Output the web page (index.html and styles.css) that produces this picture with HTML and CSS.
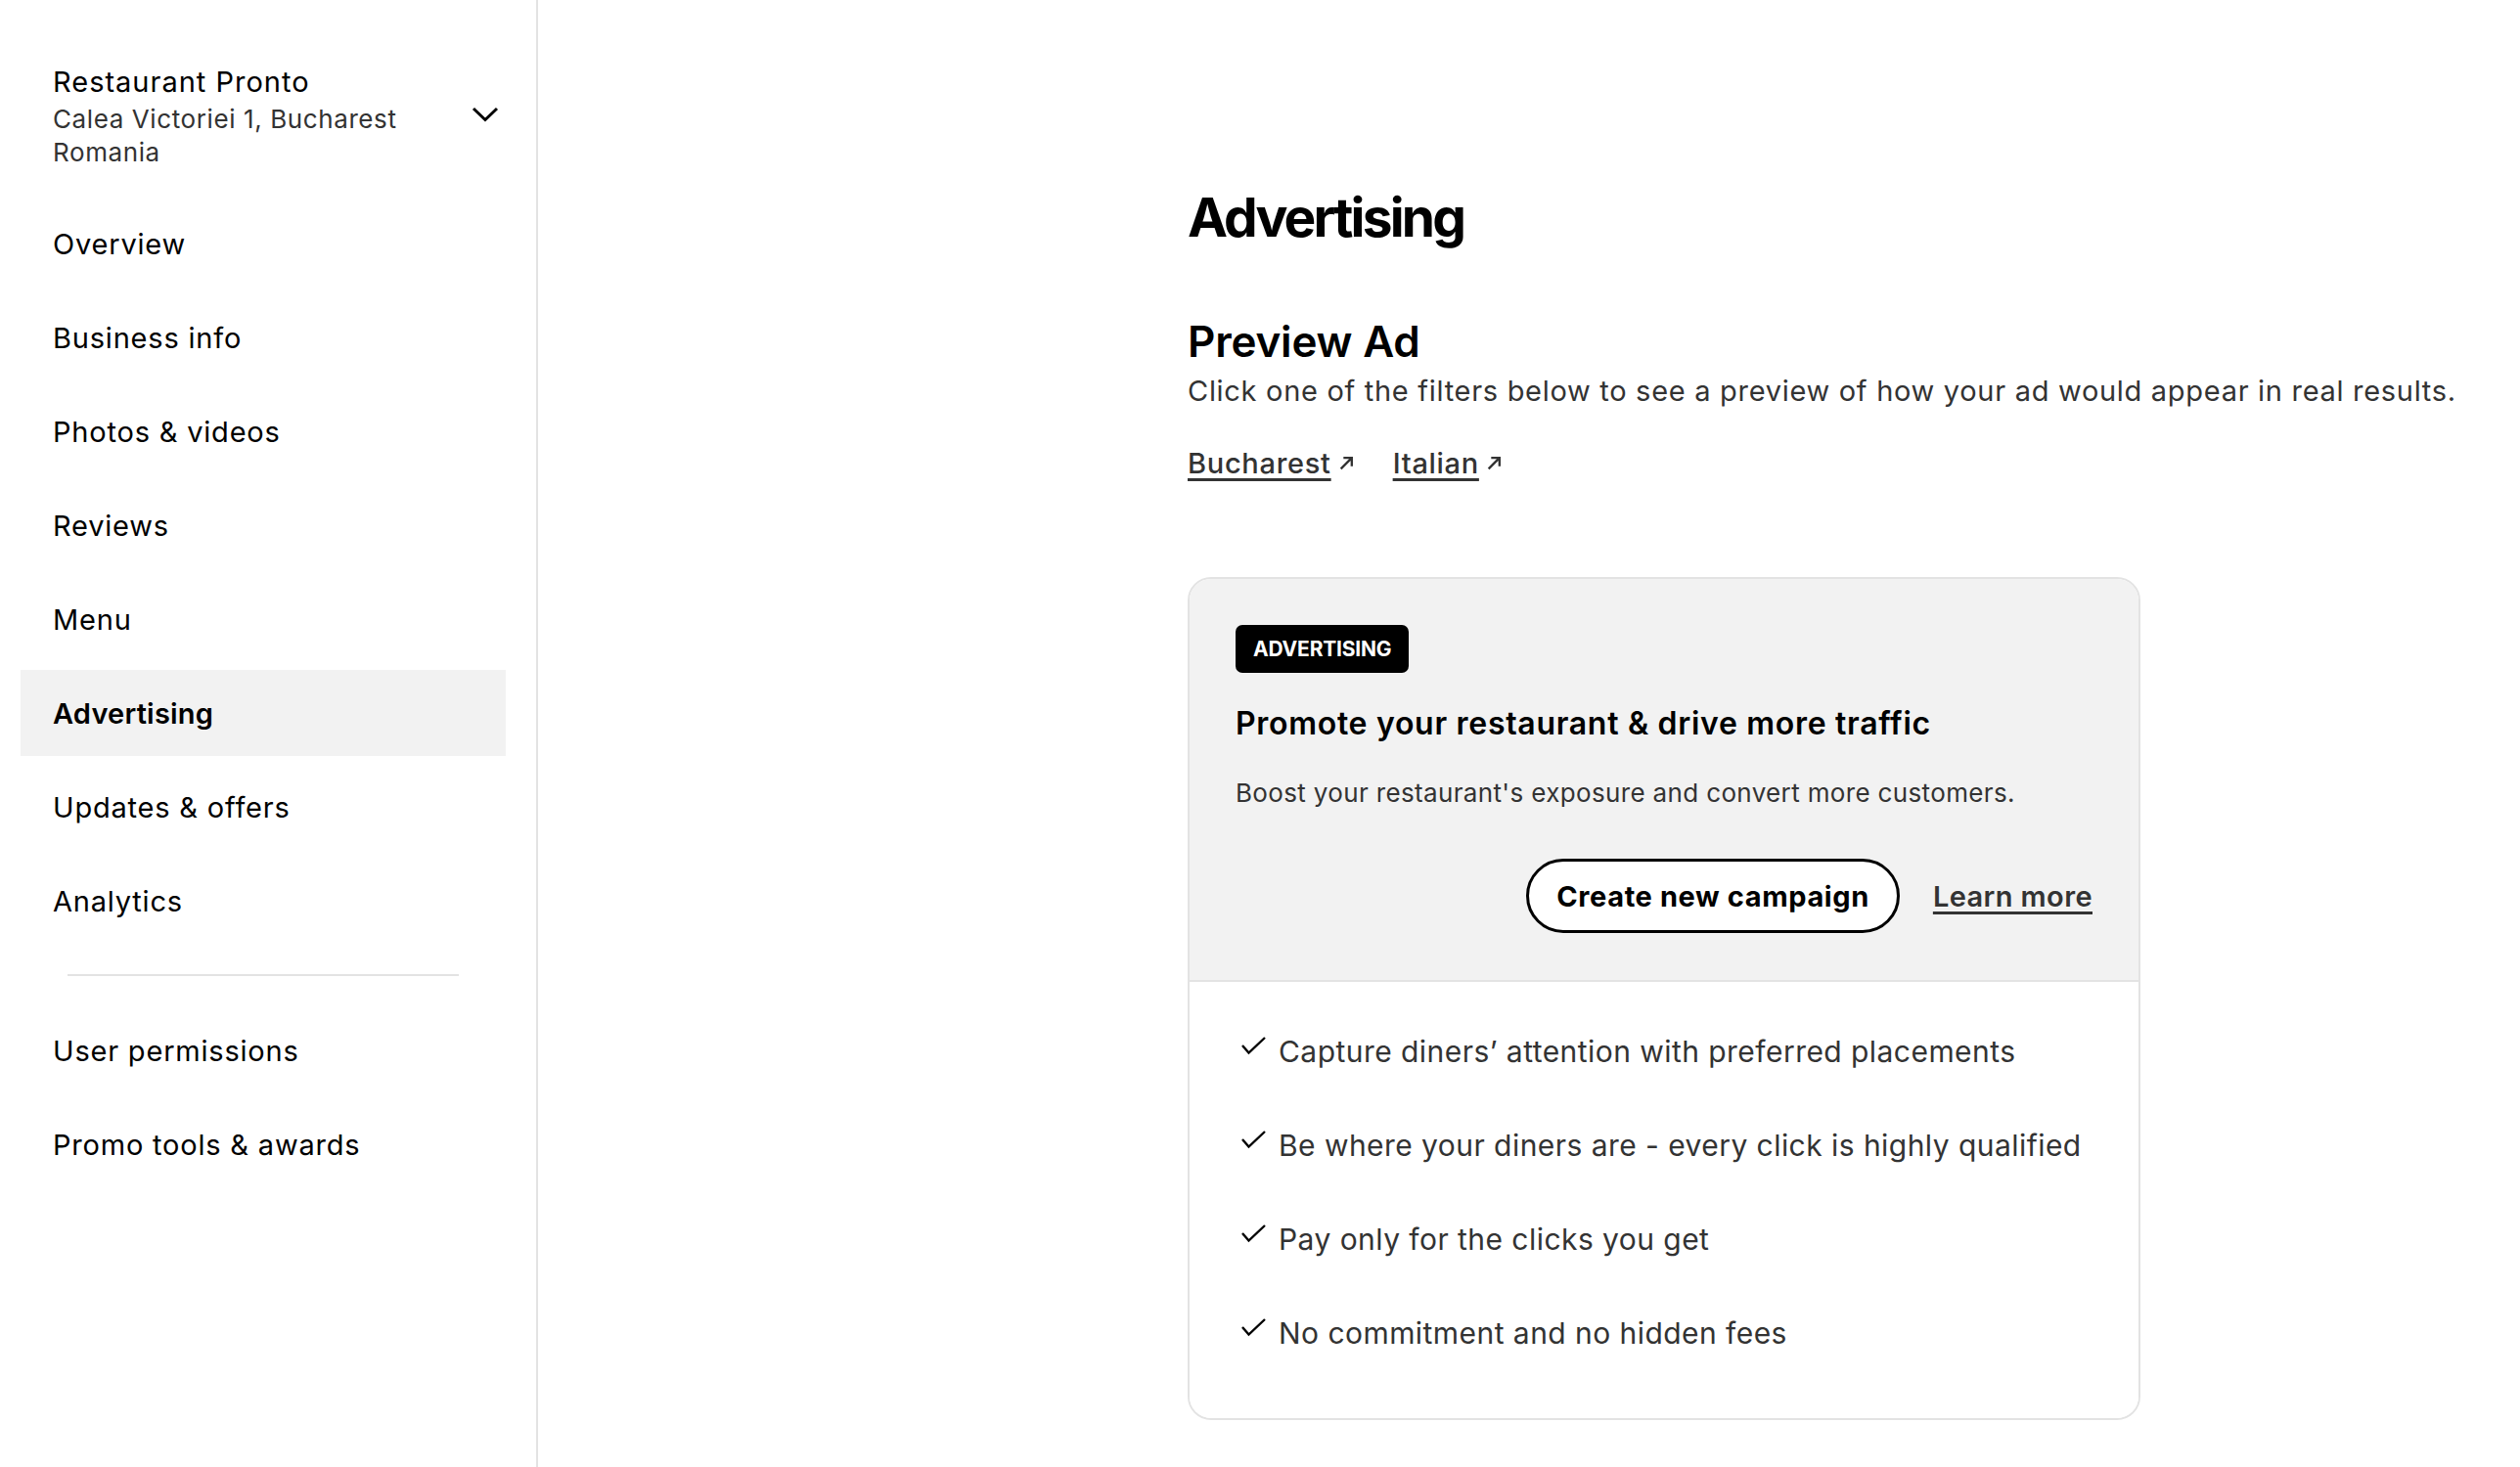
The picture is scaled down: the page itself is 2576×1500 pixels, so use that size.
FILE: index.html
```html
<!DOCTYPE html>
<html lang="en">
<head>
<meta charset="utf-8">
<title>Advertising</title>
<link rel="stylesheet" href="styles.css">
</head>
<body>
<div class="app">
  <aside class="sidebar">
    <div class="biz">
      <div class="biz-text">
        <div class="biz-name">Restaurant Pronto</div>
        <div class="biz-addr">Calea Victoriei 1, Bucharest<br>Romania</div>
      </div>
      <svg class="chev" width="28" height="16" viewBox="0 0 28 16"><path d="M2 2 L14 13.5 L26 2" fill="none" stroke="#000" stroke-width="3"/></svg>
    </div>
    <nav class="nav">
      <a class="nav-item">Overview</a>
      <a class="nav-item">Business info</a>
      <a class="nav-item">Photos &amp; videos</a>
      <a class="nav-item">Reviews</a>
      <a class="nav-item">Menu</a>
      <a class="nav-item active">Advertising</a>
      <a class="nav-item">Updates &amp; offers</a>
      <a class="nav-item">Analytics</a>
    </nav>
    <div class="divider"></div>
    <nav class="nav">
      <a class="nav-item">User permissions</a>
      <a class="nav-item">Promo tools &amp; awards</a>
    </nav>
  </aside>
  <main class="main">
    <h1 class="title">Advertising</h1>
    <h2 class="subtitle">Preview Ad</h2>
    <p class="desc">Click one of the filters below to see a preview of how your ad would appear in real results.</p>
    <div class="links">
      <a class="ext-link"><span class="ul">Bucharest</span><svg width="17" height="17" viewBox="0 0 16 16"><path d="M2.5 13.5 L13 3 M5 3 H13 V11" fill="none" stroke="#333" stroke-width="2.2"/></svg></a>
      <a class="ext-link"><span class="ul">Italian</span><svg width="17" height="17" viewBox="0 0 16 16"><path d="M2.5 13.5 L13 3 M5 3 H13 V11" fill="none" stroke="#333" stroke-width="2.2"/></svg></a>
    </div>
    <section class="card">
      <div class="card-top">
        <span class="badge">ADVERTISING</span>
        <h3 class="card-title">Promote your restaurant &amp; drive more traffic</h3>
        <p class="card-body">Boost your restaurant's exposure and convert more customers.</p>
        <div class="actions">
          <button class="btn">Create new campaign</button>
          <a class="learn">Learn more</a>
        </div>
      </div>
      <ul class="features">
        <li class="feat"><svg class="check" width="36" height="24" viewBox="0 0 36 24"><path d="M7 10 L13.5 17.5 L30 2" fill="none" stroke="#000" stroke-width="2.4"/></svg><span>Capture diners’ attention with preferred placements</span></li>
        <li class="feat"><svg class="check" width="36" height="24" viewBox="0 0 36 24"><path d="M7 10 L13.5 17.5 L30 2" fill="none" stroke="#000" stroke-width="2.4"/></svg><span>Be where your diners are - every click is highly qualified</span></li>
        <li class="feat"><svg class="check" width="36" height="24" viewBox="0 0 36 24"><path d="M7 10 L13.5 17.5 L30 2" fill="none" stroke="#000" stroke-width="2.4"/></svg><span>Pay only for the clicks you get</span></li>
        <li class="feat"><svg class="check" width="36" height="24" viewBox="0 0 36 24"><path d="M7 10 L13.5 17.5 L30 2" fill="none" stroke="#000" stroke-width="2.4"/></svg><span>No commitment and no hidden fees</span></li>
      </ul>
    </section>
  </main>
</div>
</body>
</html>
```

FILE: styles.css
```css
* { box-sizing: border-box; }
html, body { margin: 0; padding: 0; background: #fff; }
body {
  font-family: Inter, "Noto Sans", "Liberation Sans", sans-serif;
  color: #000;
  -webkit-font-smoothing: antialiased;
}
.app {
  display: flex;
  min-height: 1500px;
}
.sidebar {
  width: 550px;
  flex: 0 0 550px;
  border-right: 2px solid #e3e3e3;
  padding: 67px 31px 0 21px;
}
.biz {
  display: flex;
  align-items: center;
  justify-content: space-between;
  width: 494px;
  padding-left: 33px;
  padding-right: 5px;
}
.biz-name {
  font-size: 29px;
  line-height: 34px;
  letter-spacing: 1px;
}
.biz-addr {
  margin-top: 4px;
  font-size: 26px;
  line-height: 34px;
  color: #333;
  letter-spacing: 0.6px;
}
.chev { display: block; margin-top: -6px; }
.nav {
  display: flex;
  flex-direction: column;
  gap: 8px;
  width: 496px;
}
.biz + .nav { margin-top: 32px; }
.nav-item {
  display: flex;
  align-items: center;
  height: 88px;
  padding-left: 33px;
  font-size: 29px;
  letter-spacing: 0.8px;
  color: #000;
}
.nav-item.active {
  background: #f2f2f2;
  font-weight: 600;
  letter-spacing: 0.2px;
}
.divider {
  width: 400px;
  height: 2px;
  background: #e3e3e3;
  margin: 31px 0 32px 48px;
}
.main {
  flex: 1;
  padding: 190px 0 0 664px;
}
.title {
  margin: 0;
  font-size: 55px;
  line-height: 64px;
  font-weight: 700;
  letter-spacing: -2.8px;
}
.subtitle {
  margin: 69px 0 0;
  font-size: 44px;
  line-height: 52px;
  font-weight: 600;
  letter-spacing: -0.2px;
}
.desc {
  margin: 5px 0 0;
  font-size: 29px;
  line-height: 40px;
  color: #333;
  letter-spacing: 0.7px;
}
.links {
  display: flex;
  gap: 39px;
  margin-top: 34px;
}
.ext-link {
  display: flex;
  align-items: center;
  gap: 7px;
  font-size: 29px;
  line-height: 40px;
  font-weight: 500;
  color: #333;
  letter-spacing: 0.7px;
}
.ext-link svg { margin-top: -1px; }
.ext-link .ul {
  text-decoration: underline;
  text-decoration-thickness: 3px;
  text-underline-offset: 5px;
}
.card {
  margin-top: 96px;
  width: 974px;
  border: 2px solid #e3e3e3;
  border-radius: 24px;
  overflow: hidden;
}
.card-top {
  background: #f2f2f2;
  padding: 47px 47px 48px;
  border-bottom: 2px solid #e3e3e3;
}
.badge {
  display: inline-flex;
  align-items: center;
  height: 49px;
  padding: 0 18px;
  background: #000;
  color: #fff;
  border-radius: 7px;
  font-size: 21px;
  font-weight: 700;
  letter-spacing: -0.2px;
}
.card-title {
  margin: 32px 0 0;
  font-size: 32px;
  line-height: 40px;
  font-weight: 600;
  letter-spacing: 0.7px;
}
.card-body {
  margin: 33px 0 0;
  font-size: 26px;
  line-height: 36px;
  color: #333;
  letter-spacing: 0.35px;
}
.actions {
  display: flex;
  justify-content: flex-end;
  align-items: center;
  gap: 34px;
  margin-top: 49px;
}
.btn {
  height: 76px;
  padding: 0 28px;
  border: 3px solid #000;
  border-radius: 40px;
  background: #fff;
  font-family: inherit;
  font-size: 29px;
  font-weight: 700;
  letter-spacing: 0.6px;
  color: #000;
}
.learn {
  font-size: 29px;
  font-weight: 600;
  color: #333;
  letter-spacing: 0.4px;
  text-decoration: underline;
  text-decoration-thickness: 3px;
  text-underline-offset: 5px;
}
.features {
  list-style: none;
  margin: 0;
  padding: 31px 47px 47px;
  background: #fff;
}
.feat {
  display: flex;
  align-items: center;
  gap: 8px;
  height: 80px;
  font-size: 30px;
  color: #333;
  letter-spacing: 0.45px;
}
.feat + .feat { margin-top: 16px; }
.check { display: block; margin-top: -8px; flex: 0 0 auto; }
```
